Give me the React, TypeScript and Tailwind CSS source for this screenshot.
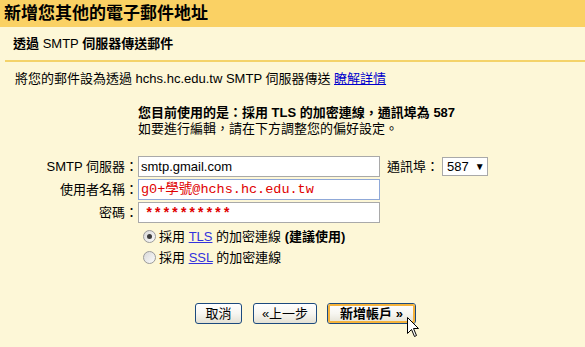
// 新增電子郵件地址 — SMTP 設定步驟對話框

const SANS = "font-['Liberation_Sans','Noto_Sans_CJK_TC',sans-serif]";
const MONO = "font-['Liberation_Mono','Noto_Sans_CJK_TC',monospace]";

/** XP 風格的按鈕 */
function XpButton({
  label,
  width,
  primary,
}: {
  label: string;
  width: string;
  primary?: boolean;
}) {
  return (
    <button
      className={`${width} h-[21px] rounded-[3px] border border-[#1c4a7e] bg-gradient-to-b from-white via-[#f7f6f1] to-[#e4e1d4] p-0 text-[13px] leading-none text-black`}
    >
      <span
        className={`flex h-full w-full items-center justify-center rounded-[2px] ${
          primary ? "border-2 border-[#f5b33c] font-bold" : ""
        }`}
      >
        {label}
      </span>
    </button>
  );
}

/** 單選鈕 */
function Radio({ checked, children }: { checked?: boolean; children: React.ReactNode }) {
  return (
    <div className="flex h-[21px] items-center pl-[143px]">
      <span className="flex h-[13px] w-[13px] items-center justify-center rounded-full border border-[#9a9a9a] bg-gradient-to-br from-[#d9d9d9] to-[#fbfbfb]">
        {checked && <span className="h-[5px] w-[5px] rounded-full bg-[#3d3d3d]" />}
      </span>
      <span className="ml-[3px]">{children}</span>
    </div>
  );
}

export default function App() {
  return (
    <div
      className={`relative h-[347px] w-[585px] overflow-hidden bg-[#fdf7d7] text-[13px] leading-4 text-black ${SANS}`}
    >
      {/* 標題列 */}
      <div className="flex h-[27px] items-center bg-[#fad164] pl-[4px] text-[17px] font-bold">
        新增您其他的電子郵件地址
      </div>

      {/* 子標題 */}
      <div className="h-[33px] pl-[13px] pt-[9px] font-bold">
        透過 <span className="font-normal">SMTP</span> 伺服器傳送郵件
      </div>
      <div className="ml-[5px] h-[2px] bg-[#f4d36a]" />

      {/* 說明 */}
      <div className="pl-[15px] pt-[9px]">
        將您的郵件設為透過 hchs.hc.edu.tw SMTP 伺服器傳送{" "}
        <a className="text-[#0000cc] underline">瞭解詳情</a>
      </div>

      <div className="mt-[18px] pl-[138px]">
        <div className="font-bold">您目前使用的是：採用 TLS 的加密連線，通訊埠為 587</div>
        <div>如要進行編輯，請在下方調整您的偏好設定。</div>
      </div>

      {/* 表單 */}
      <div className="mt-[19px] flex flex-col gap-[2px]">
        <div className="flex h-[21px] items-center">
          <div className="w-[138px] text-right">SMTP 伺服器：</div>
          <div className="flex h-[21px] w-[242px] items-center border border-[#a9a9a9] bg-white pl-[2px]">
            smtp.gmail.com
          </div>
          <div className="ml-[7px]">通訊埠：</div>
          <div className="ml-[3px] flex h-[19px] w-[46px] items-center border border-[#a9a9a9] bg-white pl-[4px]">
            587
            <span className="ml-[6px] text-[10px]">▼</span>
          </div>
        </div>
        <div className="flex h-[21px] items-center">
          <div className="w-[138px] text-right">使用者名稱：</div>
          <div
            className={`flex h-[21px] w-[242px] items-center border border-[#8fa8d8] bg-white pl-[2px] text-[13.5px] text-[#e00000] ${MONO}`}
          >
            g0+學號@hchs.hc.edu.tw
          </div>
        </div>
        <div className="flex h-[21px] items-center">
          <div className="w-[138px] text-right">密碼：</div>
          <div
            className={`flex h-[21px] w-[242px] items-center border border-[#a9a9a9] bg-white pl-[6px] pt-[3px] text-[14px] font-bold tracking-[0.2px] text-[#e00000] ${MONO}`}
          >
            **********
          </div>
        </div>
      </div>

      <div className="mt-[3px]">
        <Radio checked>
          採用 <a className="text-[#3333dd] underline">TLS</a> 的加密連線{" "}
          <span className="font-bold">(建議使用)</span>
        </Radio>
        <Radio>
          採用 <a className="text-[#3333dd] underline">SSL</a> 的加密連線
        </Radio>
      </div>

      {/* 按鈕 */}
      <div className="mt-[35px] flex items-center pl-[195px]">
        <XpButton label="取消" width="w-[47px]" />
        <div className="ml-[11px]">
          <XpButton label="«上一步" width="w-[64px]" />
        </div>
        <div className="ml-[10px]">
          <XpButton label="新增帳戶 »" width="w-[89px]" primary />
        </div>
      </div>

      {/* 滑鼠游標 */}
      <svg
        className="absolute left-[407px] top-[317px]"
        width="13"
        height="21"
        viewBox="0 0 13 21"
      >
        <path
          d="M0.5 0.5 L0.5 16.5 L4.5 12.5 L7.5 19.5 L9.5 18.5 L6.5 11.5 L11.5 11.5 Z"
          fill="white"
          stroke="black"
          strokeWidth="1"
          strokeLinejoin="miter"
        />
      </svg>
    </div>
  );
}
